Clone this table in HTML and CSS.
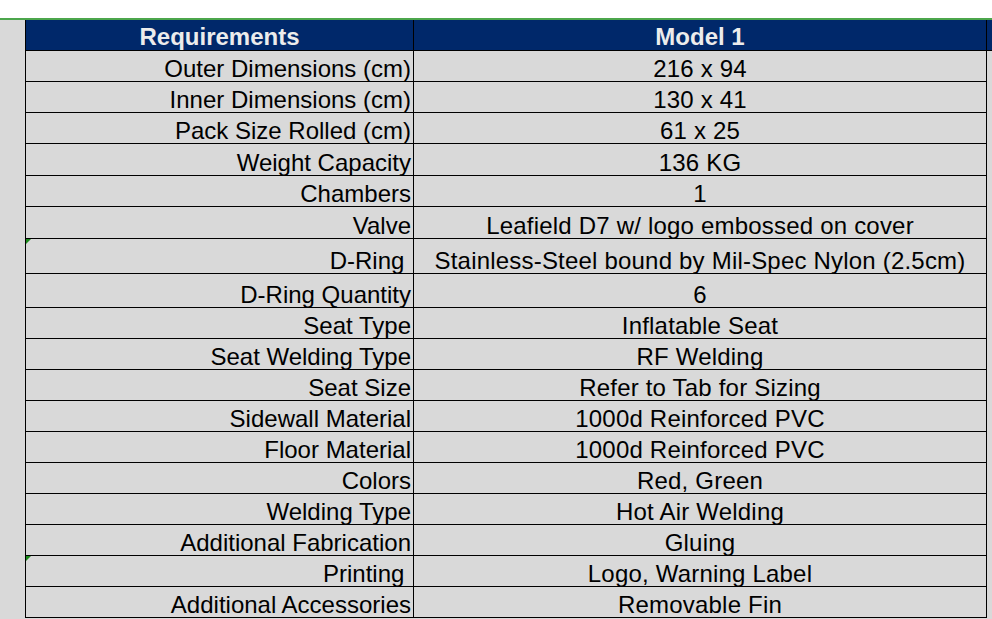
FILE: index.html
```html
<!DOCTYPE html>
<html>
<head>
<meta charset="utf-8">
<link rel="stylesheet" href="styles.css">
</head>
<body>
<div class="topbar"></div>
<div class="sheet">
  <div class="gutter"></div>
  <div class="table">
    <div class="row head"><div class="c1">Requirements</div><div class="c2">Model 1</div><div class="fill"></div></div>
    <div class="row h31"><div class="c1">Outer Dimensions (cm)</div><div class="c2">216 x 94</div><div class="fill"></div></div>
    <div class="row h31"><div class="c1">Inner Dimensions (cm)</div><div class="c2">130 x 41</div><div class="fill"></div></div>
    <div class="row h31"><div class="c1">Pack Size Rolled (cm)</div><div class="c2">61 x 25</div><div class="fill"></div></div>
    <div class="row h32"><div class="c1">Weight Capacity</div><div class="c2">136 KG</div><div class="fill"></div></div>
    <div class="row h31"><div class="c1">Chambers</div><div class="c2">1</div><div class="fill"></div></div>
    <div class="row h32"><div class="c1">Valve</div><div class="c2">Leafield D7 w/ logo embossed on cover</div><div class="fill"></div></div>
    <div class="row h35"><div class="c1 flag">D-Ring </div><div class="c2">Stainless-Steel bound by Mil-Spec Nylon (2.5cm)</div><div class="fill"></div></div>
    <div class="row h34"><div class="c1">D-Ring Quantity</div><div class="c2">6</div><div class="fill"></div></div>
    <div class="row h31"><div class="c1">Seat Type</div><div class="c2">Inflatable Seat</div><div class="fill"></div></div>
    <div class="row h31"><div class="c1">Seat Welding Type</div><div class="c2">RF Welding</div><div class="fill"></div></div>
    <div class="row h31"><div class="c1">Seat Size</div><div class="c2">Refer to Tab for Sizing</div><div class="fill"></div></div>
    <div class="row h31"><div class="c1">Sidewall Material</div><div class="c2">1000d Reinforced PVC</div><div class="fill"></div></div>
    <div class="row h31"><div class="c1">Floor Material</div><div class="c2">1000d Reinforced PVC</div><div class="fill"></div></div>
    <div class="row h31"><div class="c1">Colors</div><div class="c2">Red, Green</div><div class="fill"></div></div>
    <div class="row h31"><div class="c1">Welding Type</div><div class="c2">Hot Air Welding</div><div class="fill"></div></div>
    <div class="row h31"><div class="c1">Additional Fabrication</div><div class="c2">Gluing</div><div class="fill"></div></div>
    <div class="row h31"><div class="c1 flag">Printing </div><div class="c2">Logo, Warning Label</div><div class="fill"></div></div>
    <div class="row h31"><div class="c1">Additional Accessories</div><div class="c2">Removable Fin</div><div class="fill"></div></div>
  </div>
</div>
</body>
</html>
```
FILE: styles.css
```css
html, body {
  margin: 0;
  padding: 0;
  background: #d9d9d9;
  overflow: hidden;
}
body {
  width: 992px;
  height: 619px;
  font-family: "Liberation Sans", Arial, sans-serif;
  color: #000;
}
.topbar {
  height: 18px;
  background: #fff;
  border-bottom: 2px solid #4ca64c;
}
.sheet {
  display: flex;
}
.gutter {
  width: 25px;
  flex: none;
}
.table {
  flex: 1;
  border-left: 1px solid #000;
  display: flex;
  flex-direction: column;
}
.row {
  display: grid;
  grid-template-columns: 388px 573px 1fr;
  box-sizing: border-box;
}
.row > .c1,
.row > .c2 {
  box-sizing: border-box;
  border-right: 1px solid #000;
  border-bottom: 1px solid #000;
  display: flex;
  align-items: flex-end;
  font-size: 24px;
  line-height: 25px;
  white-space: pre;
  padding-bottom: 0;
  position: relative;
}
.c1 {
  justify-content: flex-end;
  padding-right: 2px;
}
.c2 {
  justify-content: center;
  letter-spacing: 0.2px;
}
.head {
  height: 31px;
  background: #00286a;
}
.head > .c1,
.head > .c2 {
  color: #ececec;
  font-weight: bold;
  justify-content: center;
  padding-right: 0;
  letter-spacing: 0;
  line-height: 26px;
}
.head > .fill {
  border-bottom: 1px solid #000;
}
.h31 { height: 31px; }
.h32 { height: 32px; }
.h34 { height: 34px; }
.h35 { height: 35px; }
.flag::before {
  content: "";
  position: absolute;
  top: 0;
  left: 0;
  width: 5px;
  height: 5px;
  background: #1a8a1a;
  clip-path: polygon(0 0, 100% 0, 0 100%);
}
```
